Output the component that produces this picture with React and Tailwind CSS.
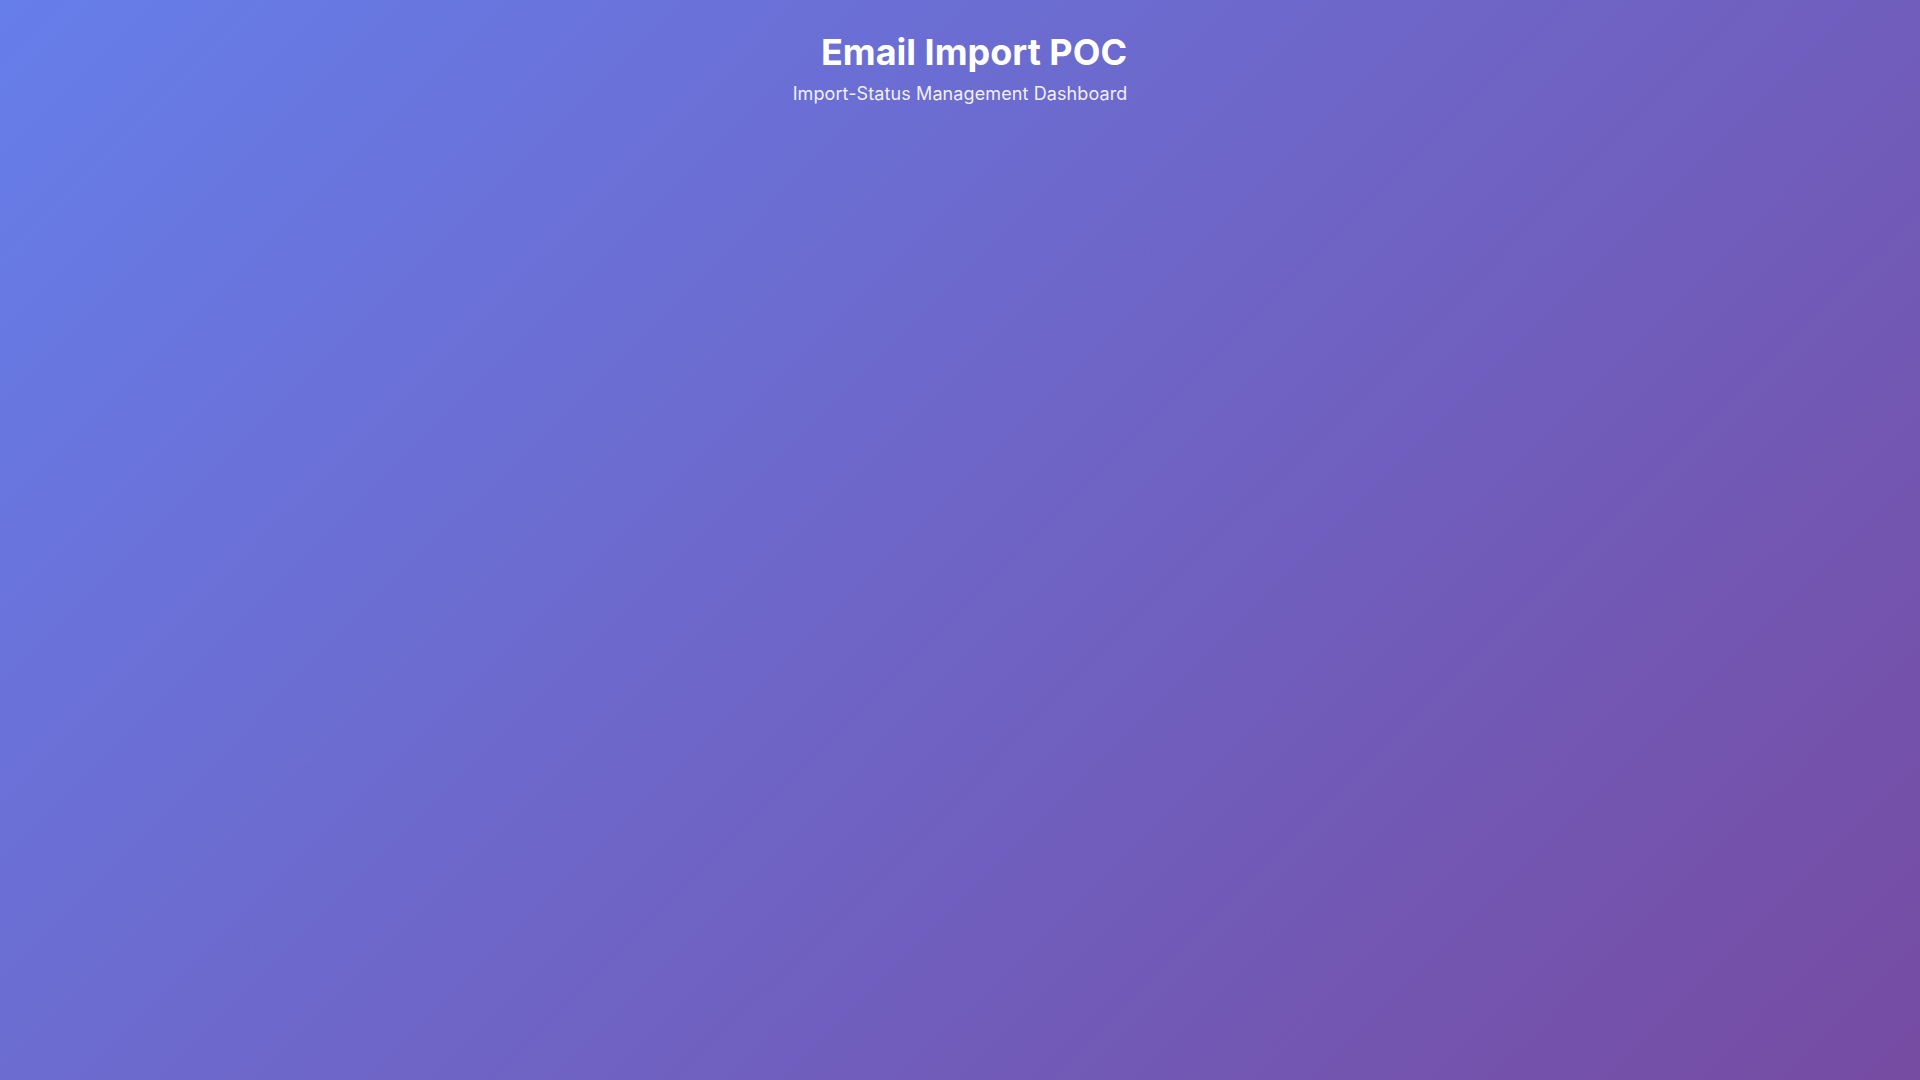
export default function App() {
  return (
    <div className="min-h-screen bg-[linear-gradient(135deg,#667eea_0%,#764ba2_100%)] font-['Inter',sans-serif]">
      <div className="mx-auto max-w-6xl px-5 pt-[31px]">
        <header className="text-center text-white">
          <h1 className="mb-[6px] text-[36px] font-bold leading-[1.2]">
            <span className="inline-block w-[28px]" aria-hidden="true" />
            Email Import POC
          </h1>
          <p className="text-[18px] leading-[1.5] tracking-[0.1px] opacity-90">Import-Status Management Dashboard</p>
        </header>
      </div>
    </div>
  );
}
